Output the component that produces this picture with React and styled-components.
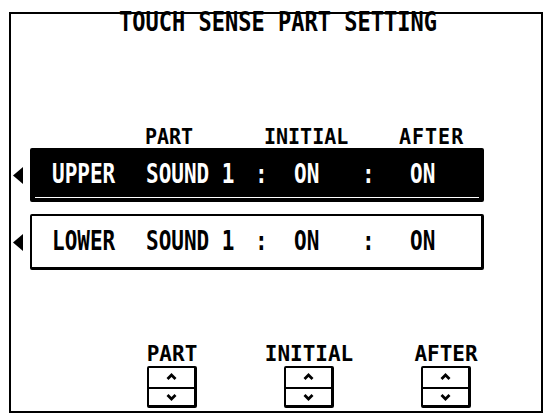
import React from "react";
import styled, { createGlobalStyle } from "styled-components";

const Global = createGlobalStyle`
  html, body {
    margin: 0;
    padding: 0;
    background: #fff;
  }
  body {
    font-family: "DejaVu Sans Mono", "Liberation Mono", monospace;
    color: #000;
  }
`;

const Screen = styled.div`
  box-sizing: border-box;
  width: 534px;
  height: 401px;
  margin: 12px 0 0 9px;
  border: 2px solid #000;
  display: flex;
  flex-direction: column;
`;

const Txt = styled.span`
  display: inline-block;
  font-weight: bold;
  font-size: ${(p) => p.$size || 21}px;
  line-height: 1;
  letter-spacing: ${(p) => p.$ls || 0}px;
  transform: scaleY(${(p) => p.$sy || 1.25});
  white-space: pre;
  color: ${(p) => (p.$inv ? "#fff" : "#000")};
`;

const Title = styled.div`
  height: 22px;
  margin-top: -2px;
  padding-left: 4px;
  display: flex;
  justify-content: center;
  align-items: center;
`;

const HeaderRow = styled.div`
  display: grid;
  grid-template-columns: 119px 135px auto;
  padding-left: 134px;
  margin-top: 93px;
  height: 16px;
  align-items: center;
`;

const Rows = styled.div`
  display: flex;
  flex-direction: column;
  gap: 12px;
  margin-top: 5px;
`;

const Row = styled.div`
  display: flex;
  align-items: center;
  gap: 7px;
  padding-left: 2px;
`;

const Pointer = styled.svg`
  width: 10px;
  height: 17px;
  flex: none;
`;

const PartBox = styled.div`
  position: relative;
  box-sizing: border-box;
  width: 454px;
  height: ${(p) => (p.$active ? 54 : 56)}px;
  border: 2px solid #000;
  border-right-width: 3px;
  border-bottom-width: 3px;
  border-radius: 2px;
  background: ${(p) => (p.$active ? "#000" : "#fff")};
  display: grid;
  grid-template-columns: 94px 109px 39px 68px 48px auto;
  align-items: center;
  padding-left: 20px;

  &::after {
    content: "";
    display: ${(p) => (p.$active ? "block" : "none")};
    position: absolute;
    left: 3px;
    right: 2px;
    bottom: 1px;
    height: 1px;
    background: #fff;
  }
`;

const Controls = styled.div`
  display: flex;
  gap: 37px;
  padding-left: 111px;
  margin-top: 76px;
`;

const Control = styled.div`
  width: 100px;
  display: flex;
  flex-direction: column;
  align-items: center;
  gap: 4px;
`;

const ControlLabel = styled.div`
  height: 16px;
  display: flex;
  align-items: center;
`;

const Spinner = styled.div`
  box-sizing: border-box;
  width: 50px;
  height: 42px;
  border: 2px solid #000;
  border-right-width: 3px;
  border-bottom-width: 3px;
  border-radius: 2px;
  display: grid;
  grid-template-rows: 1fr 1fr;
`;

const SpinHalf = styled.div`
  display: flex;
  align-items: center;
  justify-content: center;
  border-top: ${(p) => (p.$lower ? "2px solid #000" : "none")};
`;

const Chevron = ({ down }) => (
  <svg width="11" height="8" viewBox="0 0 11 8">
    <path
      d={down ? "M1.5 2 L5.5 6 L9.5 2" : "M1.5 6 L5.5 2 L9.5 6"}
      fill="none"
      stroke="#000"
      strokeWidth="2.8"
    />
  </svg>
);

const parts = [
  { name: "UPPER", sound: "SOUND 1", initial: "ON", after: "ON", active: true },
  { name: "LOWER", sound: "SOUND 1", initial: "ON", after: "ON", active: false },
];

const controls = ["PART", "INITIAL", "AFTER"];

export default function App() {
  return (
    <>
      <Global />
      <Screen>
        <Title>
          <Txt $size={22} $sy={1.2}>TOUCH SENSE PART SETTING</Txt>
        </Title>
        <HeaderRow>
          <Txt $size={20} $sy={1.05}>PART</Txt>
          <Txt $size={20} $sy={1.05}>INITIAL</Txt>
          <Txt $size={20} $sy={1.05} $ls={1}>AFTER</Txt>
        </HeaderRow>
        <Rows>
          {parts.map((p) => (
            <Row key={p.name}>
              <Pointer viewBox="0 0 10 17">
                <path d="M10 0 L0 8.5 L10 17 Z" fill="#000" />
              </Pointer>
              <PartBox $active={p.active}>
                <Txt $inv={p.active}>{p.name}</Txt>
                <Txt $inv={p.active}>{p.sound}</Txt>
                <Txt $inv={p.active}>:</Txt>
                <Txt $inv={p.active}>{p.initial}</Txt>
                <Txt $inv={p.active}>:</Txt>
                <Txt $inv={p.active}>{p.after}</Txt>
              </PartBox>
            </Row>
          ))}
        </Rows>
        <Controls>
          {controls.map((c) => (
            <Control key={c}>
              <ControlLabel>
                <Txt $size={21} $sy={1.05}>{c}</Txt>
              </ControlLabel>
              <Spinner>
                <SpinHalf>
                  <Chevron />
                </SpinHalf>
                <SpinHalf $lower>
                  <Chevron down />
                </SpinHalf>
              </Spinner>
            </Control>
          ))}
        </Controls>
      </Screen>
    </>
  );
}
